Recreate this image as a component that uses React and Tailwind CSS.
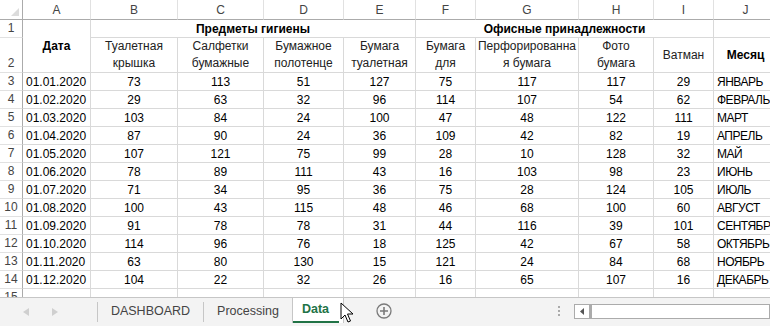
import React from 'react';

const cols = ['A', 'B', 'C', 'D', 'E', 'F', 'G', 'H', 'I', 'J'];

const rows = [
  ['01.01.2020', 73, 113, 51, 127, 75, 117, 117, 29, 'ЯНВАРЬ'],
  ['01.02.2020', 29, 63, 32, 96, 114, 107, 54, 62, 'ФЕВРАЛЬ'],
  ['01.03.2020', 103, 84, 24, 100, 47, 48, 122, 111, 'МАРТ'],
  ['01.04.2020', 87, 90, 24, 36, 109, 42, 82, 19, 'АПРЕЛЬ'],
  ['01.05.2020', 107, 121, 75, 99, 28, 10, 128, 32, 'МАЙ'],
  ['01.06.2020', 78, 89, 111, 43, 16, 103, 98, 23, 'ИЮНЬ'],
  ['01.07.2020', 71, 34, 95, 36, 75, 28, 124, 105, 'ИЮЛЬ'],
  ['01.08.2020', 100, 43, 115, 48, 46, 68, 100, 60, 'АВГУСТ'],
  ['01.09.2020', 91, 78, 78, 31, 44, 116, 39, 101, 'СЕНТЯБРЬ'],
  ['01.10.2020', 114, 96, 76, 18, 125, 42, 67, 58, 'ОКТЯБРЬ'],
  ['01.11.2020', 63, 80, 130, 15, 121, 24, 84, 68, 'НОЯБРЬ'],
  ['01.12.2020', 104, 22, 32, 26, 16, 65, 107, 16, 'ДЕКАБРЬ'],
];

const subHeaders = [
  ['Туалетная', 'крышка'],
  ['Салфетки', 'бумажные'],
  ['Бумажное', 'полотенце'],
  ['Бумага', 'туалетная'],
  ['Бумага', 'для'],
  ['Перфорированна', 'я бумага'],
  ['Фото', 'бумага'],
  ['Ватман'],
];

const cell = 'border-r border-b border-[#d9d9d9] overflow-visible whitespace-nowrap';
const rowHead = 'border-r border-b border-r-[#ababab] border-b-[#e1e1e1] text-[#444] flex items-end justify-center leading-[17px]';

function Sheet() {
  return (
    <div className="h-[297px] overflow-hidden bg-white">
      <div className="grid grid-cols-[23px_68px_87px_86px_80px_72px_60px_103px_75px_60px_64px] grid-rows-[20px_18px_35px_repeat(13,18px)] text-[12px] text-black">
        {/* column headings */}
        <div className="border-r border-b border-r-[#ababab] border-b-[#ababab] flex items-end justify-end pr-[3px] pb-[3px]">
          <svg width="8" height="8" viewBox="0 0 8 8">
            <polygon points="8,0 8,8 0,8" fill="#dcdcdc" />
          </svg>
        </div>
        {cols.map((c) => (
          <div key={c} className="border-r border-b border-r-[#e1e1e1] border-b-[#ababab] text-[#444] flex items-center justify-center">
            {c}
          </div>
        ))}

        {/* row 1 */}
        <div className={rowHead}>1</div>
        <div className={`${cell} row-span-2 flex items-center justify-center font-bold`}>Дата</div>
        <div className={`${cell} col-span-4 flex items-center justify-center font-bold`}>Предметы гигиены</div>
        <div className={`${cell} col-span-4 flex items-center justify-center font-bold`}>Офисные принадлежности</div>
        <div className={cell}></div>

        {/* row 2 */}
        <div className={rowHead}>2</div>
        {subHeaders.map((h, i) => (
          <div key={i} className={`${cell} overflow-hidden flex flex-col items-center justify-center leading-[17px] text-[#222]`}>
            {h.map((t) => (
              <span key={t}>{t}</span>
            ))}
          </div>
        ))}
        <div className={`${cell} flex items-center justify-center font-bold`}>Месяц</div>

        {/* data rows */}
        {rows.map((r, i) => (
          <React.Fragment key={i}>
            <div className={rowHead}>{i + 3}</div>
            <div className={`${cell} flex items-center pl-[3px]`}>{r[0]}</div>
            {r.slice(1, 9).map((v, j) => (
              <div key={j} className={`${cell} flex items-center justify-center`}>{v}</div>
            ))}
            <div className={`${cell} flex items-center pl-[3px] tracking-[-0.5px]`}>{r[9]}</div>
          </React.Fragment>
        ))}

        {/* row 15 */}
        <div className={rowHead}>15</div>
        {cols.map((c) => (
          <div key={c} className={cell}></div>
        ))}
      </div>
    </div>
  );
}

function TabBar() {
  return (
    <div className="relative h-[29px] border-t border-[#c6c6c6] bg-[#f3f3f3] flex text-[12.5px] text-[#444]">
      <div className="w-[97px] flex items-center">
        <svg className="ml-[23px]" width="6" height="8" viewBox="0 0 6 8">
          <polygon points="6,0 6,8 0,4" fill="#cfcfcf" />
        </svg>
        <svg className="ml-[23px]" width="6" height="8" viewBox="0 0 6 8">
          <polygon points="0,0 0,8 6,4" fill="#cfcfcf" />
        </svg>
      </div>
      <div className="w-px h-[20px] mt-[4px] bg-[#c6c6c6]"></div>
      <div className="w-[105px] flex items-center justify-center pb-[2px]">DASHBOARD</div>
      <div className="w-px h-[20px] mt-[4px] bg-[#c6c6c6]"></div>
      <div className="w-[88px] flex items-center justify-center pb-[2px]">Processing</div>
      <div className="w-[52px] h-[25px] bg-white border-x border-[#c6c6c6] flex flex-col">
        <div className="flex-1 flex items-center justify-center font-bold text-[#217346] pl-[1px] pr-[6px]">Data</div>
        <div className="h-[2px] bg-[#217346] mr-[4px]"></div>
      </div>
      <div className="ml-[32px] flex items-center pb-[2px]">
        <svg width="16" height="16" viewBox="0 0 16 16">
          <circle cx="8" cy="8" r="7" fill="none" stroke="#7a7a7a" strokeWidth="1.3" />
          <path d="M8 4v8M4 8h8" stroke="#7a7a7a" strokeWidth="1.6" />
        </svg>
      </div>
      <div className="ml-[166px] flex flex-col justify-center gap-[2px] pb-[2px]">
        <div className="w-[2px] h-[2px] bg-[#aaa]"></div>
        <div className="w-[2px] h-[2px] bg-[#aaa]"></div>
        <div className="w-[2px] h-[2px] bg-[#aaa]"></div>
      </div>
      <div className="ml-[14px] mt-[6px] h-[15px] flex flex-1">
        <div className="w-[16px] border border-[#ababab] bg-white flex items-center justify-center">
          <svg width="4" height="7" viewBox="0 0 4 7">
            <polygon points="4,0 4,7 0,3.5" fill="#555" />
          </svg>
        </div>
        <div className="flex-1 border border-l-2 border-[#ababab] bg-white"></div>
      </div>

      {/* mouse pointer */}
      <svg className="absolute left-[340px] top-[4px]" width="14" height="22" viewBox="0 0 14 22">
        <path d="M1 1 L1 17 L5 13 L8 20 L10.5 19 L7.5 12 L13 12 Z" fill="#fff" stroke="#000" strokeWidth="1" strokeLinejoin="round" />
      </svg>
    </div>
  );
}

export default function App() {
  return (
    <div className="w-[770px] h-[326px] overflow-hidden bg-white font-['Liberation_Sans',Arial,sans-serif]">
      <Sheet />
      <TabBar />
    </div>
  );
}
